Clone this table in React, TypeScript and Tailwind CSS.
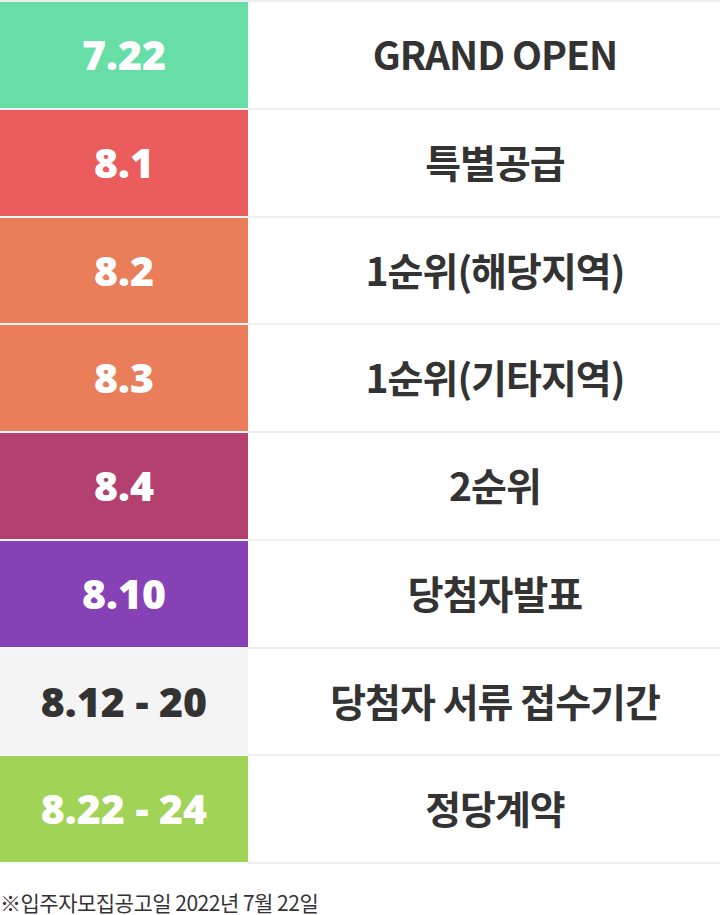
import React from "react";

const rows = [
  { date: "7.22", label: "GRAND OPEN", bg: "bg-[#67dea6]", text: "text-white" },
  { date: "8.1", label: "특별공급", bg: "bg-[#eb5c5c]", text: "text-white" },
  { date: "8.2", label: "1순위(해당지역)", bg: "bg-[#ea7e5b]", text: "text-white" },
  { date: "8.3", label: "1순위(기타지역)", bg: "bg-[#ea7e5b]", text: "text-white" },
  { date: "8.4", label: "2순위", bg: "bg-[#b3406f]", text: "text-white" },
  { date: "8.10", label: "당첨자발표", bg: "bg-[#8541b5]", text: "text-white" },
  { date: "8.12 - 20", label: "당첨자 서류 접수기간", bg: "bg-[#f4f4f4]", text: "text-[#333333]" },
  { date: "8.22 - 24", label: "정당계약", bg: "bg-[#a0d356]", text: "text-white" },
];

export default function App() {
  return (
    <div className="w-[720px] h-[915px] overflow-hidden bg-white">
      <div className="border-t-2 border-[#eeeeee]">
        {rows.map((r) => (
          <div key={r.date} className="flex h-[107.75px]">
            <div
              className={`w-[248px] flex items-center justify-center border-b-2 border-[#f8f8f8] ${r.bg} ${r.text} text-[41px] font-extrabold tracking-[0px]`}
              style={{ fontFamily: '"Open Sans", sans-serif' }}
            >
              {r.date}
            </div>
            <div
              className="flex-1 flex items-center justify-center border-b-2 border-[#eeeeee] text-[#333333] text-[39px] font-bold tracking-[-1px] pb-[3px] pl-[22px]"
              style={{ fontFamily: '"Noto Sans CJK KR", sans-serif' }}
            >
              {r.label}
            </div>
          </div>
        ))}
      </div>
      <div
        className="pt-[28px] text-[21px] leading-[21px] text-[#333333] tracking-[-0.5px] whitespace-nowrap"
        style={{ fontFamily: '"Noto Sans CJK KR", sans-serif' }}
      >
        ※입주자모집공고일 2022년 7월 22일
      </div>
    </div>
  );
}
